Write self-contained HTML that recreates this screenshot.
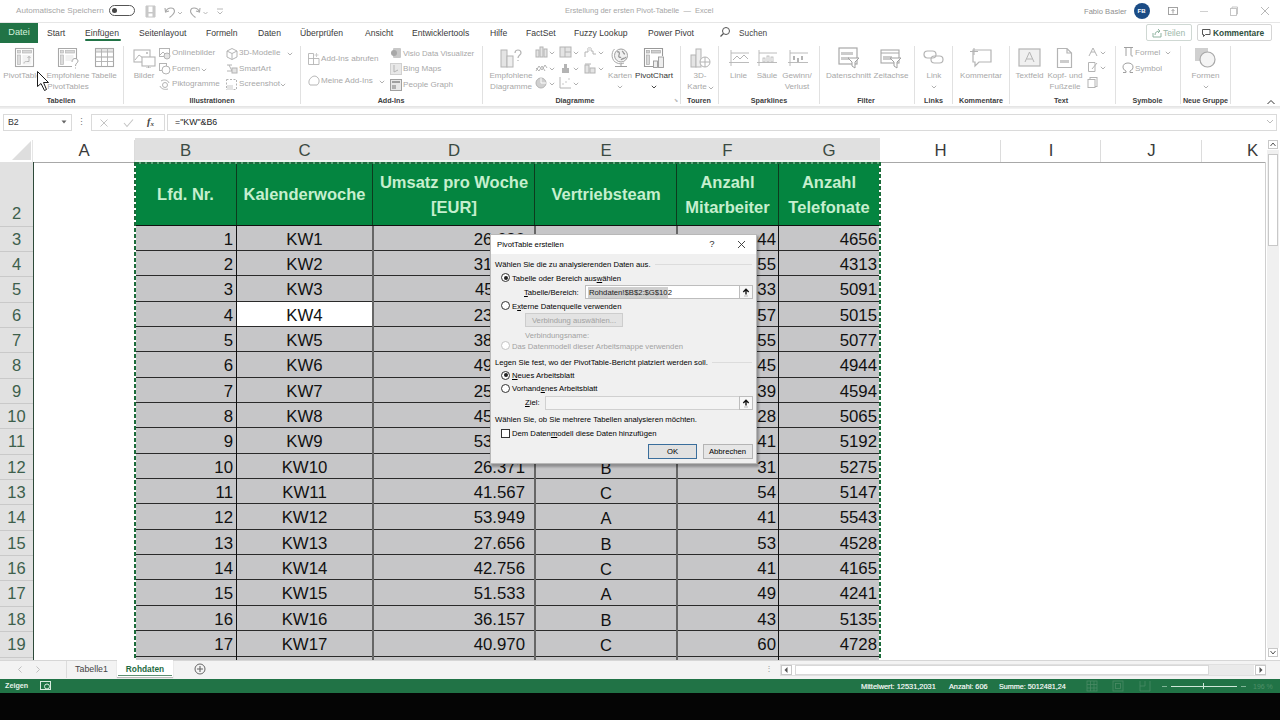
<!DOCTYPE html><html><head><meta charset="utf-8"><style>
html,body{margin:0;padding:0;width:1280px;height:720px;overflow:hidden;background:#fff;}
body{position:relative;font-family:"Liberation Sans",sans-serif;}
.t{position:absolute;white-space:pre;line-height:1;transform-origin:0 0;}
.t{margin-top:-0.5em;}
u{text-underline-offset:1px;text-decoration-thickness:0.8px;}
</style></head><body>

<div style="position:absolute;left:0px;top:0px;width:1280px;height:22px;background:#fff;"></div>
<div style="position:absolute;left:0px;top:22px;width:1280px;height:1px;background:#e6e6e6;"></div>
<div class="t" style="left:16px;top:11px;font-size:8.1px;color:#a6a6a6;font-weight:400;">Automatische Speichern</div>
<div style="position:absolute;left:109px;top:5px;width:26px;height:11px;border:1px solid #555;border-radius:6px;box-sizing:border-box;"></div>
<div style="position:absolute;left:112px;top:8px;width:5px;height:5px;background:#444;border-radius:50%;"></div>
<svg style="position:absolute;left:144px;top:4px;" width="13" height="14" viewBox="0 0 13 14" fill="none"><path d="M2 2 H11 V13 H2 Z" stroke="#c4c4c4" stroke-width="1"/><rect x="2" y="2" width="2.5" height="11" fill="#c8c8c8"/><rect x="8.5" y="2" width="2.5" height="11" fill="#c8c8c8"/><rect x="4" y="8" width="5" height="1.5" fill="#c8c8c8"/></svg>
<svg style="position:absolute;left:163px;top:3px;" width="26" height="16" viewBox="0 0 26 16" fill="none"><path d="M2.5 8.5 C5 4 11 4 11.5 8 C11.5 10 10 12 6.5 14.5" stroke="#a8a8a8" stroke-width="1.1"/><path d="M2 5 L2.5 9 L6 8" stroke="#a8a8a8" stroke-width="1.1"/><path d="M15 9 l2 2 l2 -2" stroke="#b0b0b0" stroke-width="0.9"/></svg>
<svg style="position:absolute;left:189px;top:3px;" width="26" height="16" viewBox="0 0 26 16" fill="none"><path d="M10.5 8.5 C8 4 2 4 1.5 8 C1.5 10 3 12 6.5 14.5" stroke="#a8a8a8" stroke-width="1.1"/><path d="M11 5 L10.5 9 L7 8" stroke="#a8a8a8" stroke-width="1.1"/><path d="M14.5 9 l2 2 l2 -2" stroke="#b0b0b0" stroke-width="0.9"/></svg>
<svg style="position:absolute;left:215px;top:6px;" width="10" height="10" viewBox="0 0 10 10" fill="none"><path d="M2 3 H8" stroke="#b0b0b0" stroke-width="0.9"/><path d="M2.5 5.5 l2.5 2.5 l2.5 -2.5" stroke="#b0b0b0" stroke-width="0.9"/></svg>
<div class="t" style="left:565px;top:11px;font-size:7.5px;color:#a6a6a6;font-weight:400;">Erstellung der ersten Pivot-Tabelle  —  Excel</div>
<div class="t" style="left:1084px;top:12px;font-size:7.6px;color:#8f8f8f;font-weight:400;">Fabio Basler</div>
<div style="position:absolute;left:1133.5px;top:3px;width:16px;height:16px;background:#1b4c85;border-radius:50%;"></div>
<div class="t" style="left:1141.5px;transform:translateX(-50%);top:11.2px;font-size:6px;color:#fff;font-weight:700;">FB</div>
<svg style="position:absolute;left:1166px;top:5px;" width="13" height="12" viewBox="0 0 13 12" fill="none"><rect x="2.5" y="2.5" width="9" height="7" stroke="#999" stroke-width="0.9"/><path d="M7 8.5 V4.5 M5.5 6 L7 4.5 L8.5 6" stroke="#999" stroke-width="0.9"/></svg>
<div style="position:absolute;left:1200px;top:11px;width:8px;height:1px;background:#d0d0d0;"></div>
<svg style="position:absolute;left:1228px;top:5px;" width="12" height="12" viewBox="0 0 12 12" fill="none"><rect x="2.5" y="3.5" width="6" height="7" stroke="#c0c0c0" stroke-width="0.9"/><path d="M4 3.5 V2 H9.5 V9 H8.5" stroke="#c0c0c0" stroke-width="0.9"/></svg>
<svg style="position:absolute;left:1259px;top:5px;" width="12" height="12" viewBox="0 0 12 12" fill="none"><path d="M2 2 L10 10 M10 2 L2 10" stroke="#b0b0b0" stroke-width="0.9"/></svg>
<div style="position:absolute;left:0px;top:23px;width:38px;height:20px;background:#217346;"></div>
<div class="t" style="left:19px;transform:translateX(-50%);top:33px;font-size:9.2px;color:#d4f2dc;font-weight:400;">Datei</div>
<div class="t" style="left:47px;top:33px;font-size:8.6px;color:#3a3a3a;font-weight:400;">Start</div>
<div class="t" style="left:85px;top:33px;font-size:8.6px;color:#3a3a3a;font-weight:400;">Einfügen</div>
<div class="t" style="left:139px;top:33px;font-size:8.6px;color:#3a3a3a;font-weight:400;">Seitenlayout</div>
<div class="t" style="left:206px;top:33px;font-size:8.6px;color:#3a3a3a;font-weight:400;">Formeln</div>
<div class="t" style="left:258px;top:33px;font-size:8.6px;color:#3a3a3a;font-weight:400;">Daten</div>
<div class="t" style="left:300px;top:33px;font-size:8.6px;color:#3a3a3a;font-weight:400;">Überprüfen</div>
<div class="t" style="left:365px;top:33px;font-size:8.6px;color:#3a3a3a;font-weight:400;">Ansicht</div>
<div class="t" style="left:412px;top:33px;font-size:8.6px;color:#3a3a3a;font-weight:400;">Entwicklertools</div>
<div class="t" style="left:490px;top:33px;font-size:8.6px;color:#3a3a3a;font-weight:400;">Hilfe</div>
<div class="t" style="left:526px;top:33px;font-size:8.6px;color:#3a3a3a;font-weight:400;">FactSet</div>
<div class="t" style="left:574px;top:33px;font-size:8.6px;color:#3a3a3a;font-weight:400;">Fuzzy Lookup</div>
<div class="t" style="left:648px;top:33px;font-size:8.6px;color:#3a3a3a;font-weight:400;">Power Pivot</div>
<div style="position:absolute;left:85px;top:39px;width:36px;height:2px;background:#217346;border-radius:1px;"></div>
<svg style="position:absolute;left:719px;top:26px;" width="12" height="12" viewBox="0 0 12 12" fill="none"><circle cx="7" cy="5" r="3.5" stroke="#555" stroke-width="1"/><path d="M4.5 7.5 L1.5 10.5" stroke="#555" stroke-width="1.2"/></svg>
<div class="t" style="left:739px;top:33px;font-size:8.3px;color:#444;font-weight:400;">Suchen</div>
<div style="position:absolute;left:1146px;top:24px;width:46px;height:17px;border:1px solid #cfd8d3;border-radius:2px;box-sizing:border-box;background:#fff;"></div>
<svg style="position:absolute;left:1151px;top:27px;" width="12" height="12" viewBox="0 0 12 12" fill="none"><path d="M2 6 V10 H10 V6" stroke="#8fb3a0" stroke-width="1"/><path d="M4 8 C4 5 6 4 9 4 M7 2 L9 4 L7 6" stroke="#8fb3a0" stroke-width="1"/></svg>
<div class="t" style="left:1163px;top:33px;font-size:8.5px;color:#9db8aa;font-weight:400;">Teilen</div>
<div style="position:absolute;left:1197px;top:24px;width:75px;height:17px;border:1px solid #d5d5d5;border-radius:2px;box-sizing:border-box;background:#fff;"></div>
<svg style="position:absolute;left:1201px;top:28px;" width="10" height="10" viewBox="0 0 10 10" fill="none"><path d="M1.5 1.5 H9 V6.5 H4.5 L2.5 8.5 V6.5 H1.5 Z" stroke="#444" stroke-width="0.9"/></svg>
<div class="t" style="left:1213px;top:33px;font-size:8.4px;color:#2f5040;font-weight:700;">Kommentare</div>
<div style="position:absolute;left:0px;top:43px;width:1280px;height:64px;background:#fff;"></div>
<div style="position:absolute;left:0px;top:106px;width:1280px;height:3px;background:linear-gradient(#e2e2e2,#f4f4f4);"></div>
<div style="position:absolute;left:123px;top:46px;width:1px;height:58px;background:#e1e1e1;"></div>
<div style="position:absolute;left:300px;top:46px;width:1px;height:58px;background:#e1e1e1;"></div>
<div style="position:absolute;left:482px;top:46px;width:1px;height:58px;background:#e1e1e1;"></div>
<div style="position:absolute;left:680px;top:46px;width:1px;height:58px;background:#e1e1e1;"></div>
<div style="position:absolute;left:718px;top:46px;width:1px;height:58px;background:#e1e1e1;"></div>
<div style="position:absolute;left:819px;top:46px;width:1px;height:58px;background:#e1e1e1;"></div>
<div style="position:absolute;left:914px;top:46px;width:1px;height:58px;background:#e1e1e1;"></div>
<div style="position:absolute;left:952px;top:46px;width:1px;height:58px;background:#e1e1e1;"></div>
<div style="position:absolute;left:1009px;top:46px;width:1px;height:58px;background:#e1e1e1;"></div>
<div style="position:absolute;left:1115px;top:46px;width:1px;height:58px;background:#e1e1e1;"></div>
<div style="position:absolute;left:1180px;top:46px;width:1px;height:58px;background:#e1e1e1;"></div>
<div style="position:absolute;left:1230px;top:46px;width:1px;height:58px;background:#e1e1e1;"></div>
<svg style="position:absolute;left:14px;top:47px;" width="22" height="22" viewBox="0 0 22 22" fill="none"><rect x="1.5" y="1.5" width="18" height="18" stroke="#a8a8a8" stroke-width="1.1"/><rect x="3.5" y="3.5" width="3" height="2.5" fill="#d8d8d8" stroke="#b8b8b8" stroke-width="0.7"/><rect x="8.5" y="3.5" width="9" height="2.5" fill="#d8d8d8" stroke="#b8b8b8" stroke-width="0.7"/><rect x="3.5" y="8" width="3" height="9.5" fill="#dcdcdc" stroke="#b8b8b8" stroke-width="0.7"/><rect x="8.5" y="8" width="9" height="9.5" fill="#f2f2f2"/><path d="M10 16.5 C10 15 11 14.5 12.5 14.5 H15 V9.5 M13.5 11 L15 9.3 L16.5 11" stroke="#b0b0b0" stroke-width="0.9"/></svg>
<div class="t" style="left:22px;transform:translateX(-50%);top:76.5px;font-size:8.1px;color:#a8a8a8;font-weight:400;">PivotTable</div>
<svg style="position:absolute;left:57px;top:47px;" width="24" height="23" viewBox="0 0 24 23" fill="none"><path d="M15 19.5 H1.5 V1.5 H19.5 V12" stroke="#a8a8a8" stroke-width="1.1"/><rect x="3.5" y="3.5" width="3" height="2.5" fill="#d8d8d8" stroke="#b8b8b8" stroke-width="0.7"/><rect x="8.5" y="3.5" width="9" height="2.5" fill="#d8d8d8" stroke="#b8b8b8" stroke-width="0.7"/><rect x="3.5" y="8" width="3" height="9.5" fill="#dcdcdc" stroke="#b8b8b8" stroke-width="0.7"/><rect x="8.5" y="8" width="8" height="6" fill="#f0f0f0"/><path d="M15 15 C15 12.5 16.5 11.5 18 11.5 C19.5 11.5 21 12.5 21 14 C21 16 18.5 16 18.5 19 M18.5 20.5 V21.5" stroke="#a8a8a8" stroke-width="1"/></svg>
<div class="t" style="left:68px;transform:translateX(-50%);top:76.5px;font-size:8.1px;color:#a8a8a8;font-weight:400;">Empfohlene</div>
<div class="t" style="left:68px;transform:translateX(-50%);top:87.5px;font-size:8.1px;color:#a8a8a8;font-weight:400;">PivotTables</div>
<svg style="position:absolute;left:94px;top:47px;" width="22" height="22" viewBox="0 0 22 22" fill="none"><rect x="1.5" y="1.5" width="18" height="18" fill="#fff" stroke="#a8a8a8" stroke-width="1.1"/><rect x="2" y="2" width="17" height="3" fill="#e4e4e4"/><rect x="2" y="9" width="17" height="2" fill="#ececec"/><path d="M1.5 5 H19.5 M1.5 10 H19.5 M1.5 14.5 H19.5 M7.5 1.5 V19.5 M13.5 1.5 V19.5" stroke="#b0b0b0" stroke-width="0.9"/></svg>
<div class="t" style="left:104px;transform:translateX(-50%);top:76.5px;font-size:8.1px;color:#a8a8a8;font-weight:400;">Tabelle</div>
<div class="t" style="left:61px;transform:translateX(-50%);top:101px;font-size:7.2px;color:#404040;font-weight:700;">Tabellen</div>
<svg style="position:absolute;left:36px;top:70px;" width="16" height="24" viewBox="0 0 16 24" fill="none"><path d="M1.5 1.5 V16.5 L5 13.5 L8.5 20.5 L10.5 19.5 L7.5 12.5 H12.5 Z" fill="#fff" stroke="#1a1a1a" stroke-width="1" stroke-linejoin="miter"/></svg>
<svg style="position:absolute;left:133px;top:49px;" width="23" height="19" viewBox="0 0 23 19" fill="none"><rect x="1" y="1" width="16" height="12" stroke="#b4b4b4" stroke-width="1.1"/><path d="M2 11 L6 6 L10 9" stroke="#b4b4b4" stroke-width="1"/><circle cx="14" cy="4" r="1" fill="#b4b4b4"/><rect x="9" y="8" width="13" height="9" fill="#fff" stroke="#b4b4b4" stroke-width="1.1"/><path d="M15.5 17 V19 M13 19 H18" stroke="#b4b4b4"/></svg>
<div class="t" style="left:144px;transform:translateX(-50%);top:76.5px;font-size:8.1px;color:#a8a8a8;font-weight:400;">Bilder</div>
<svg style="position:absolute;left:159px;top:47.5px;" width="12" height="12" viewBox="0 0 12 12" fill="none"><rect x="0.5" y="0.5" width="10" height="8" stroke="#b4b4b4"/><path d="M1 7 L4 4 L6 6" stroke="#b4b4b4"/><circle cx="8" cy="8" r="3" fill="#e4e4e4" stroke="#b4b4b4"/></svg>
<div class="t" style="left:172px;top:53.5px;font-size:8.1px;color:#a8a8a8;font-weight:400;">Onlinebilder</div>
<svg style="position:absolute;left:159px;top:63px;" width="12" height="12" viewBox="0 0 12 12" fill="none"><rect x="0.5" y="0.5" width="7" height="7" stroke="#b4b4b4"/><circle cx="7" cy="7" r="4" fill="#fff" stroke="#b4b4b4"/></svg>
<div class="t" style="left:172px;top:69px;font-size:8.1px;color:#a8a8a8;font-weight:400;">Formen</div>
<svg style="position:absolute;left:201px;top:67.5px;" width="6" height="4" viewBox="0 0 6 4" fill="none"><path d="M0.8 0.8 L3 3 L5.2 0.8" stroke="#a8a8a8" stroke-width="0.9"/></svg>
<svg style="position:absolute;left:159px;top:78.5px;" width="12" height="12" viewBox="0 0 12 12" fill="none"><path d="M2 2 C5 0 9 1 10 4 M1 7 C2 10 6 11 9 10" stroke="#b4b4b4"/><circle cx="6" cy="6" r="2.5" stroke="#b4b4b4"/></svg>
<div class="t" style="left:172px;top:84.5px;font-size:8.1px;color:#a8a8a8;font-weight:400;">Piktogramme</div>
<svg style="position:absolute;left:226px;top:47.5px;" width="12" height="12" viewBox="0 0 12 12" fill="none"><path d="M6 0.5 L11 3 V9 L6 11.5 L1 9 V3 Z M1 3 L6 5.5 L11 3 M6 5.5 V11.5" stroke="#b4b4b4"/></svg>
<div class="t" style="left:239px;top:53.5px;font-size:8.1px;color:#a8a8a8;font-weight:400;">3D-Modelle</div>
<svg style="position:absolute;left:287px;top:52px;" width="6" height="4" viewBox="0 0 6 4" fill="none"><path d="M0.8 0.8 L3 3 L5.2 0.8" stroke="#a8a8a8" stroke-width="0.9"/></svg>
<svg style="position:absolute;left:226px;top:63px;" width="12" height="12" viewBox="0 0 12 12" fill="none"><path d="M1 2 H6 M3 2 L6 8 M1 8 H6" stroke="#b4b4b4"/><rect x="6" y="5" width="5" height="5" fill="#e4e4e4" stroke="#b4b4b4"/></svg>
<div class="t" style="left:239px;top:69px;font-size:8.1px;color:#a8a8a8;font-weight:400;">SmartArt</div>
<svg style="position:absolute;left:226px;top:78.5px;" width="12" height="12" viewBox="0 0 12 12" fill="none"><rect x="0.5" y="0.5" width="10" height="10" stroke="#b4b4b4" stroke-dasharray="2 1.5"/><rect x="1" y="6" width="6" height="5" fill="#e4e4e4"/></svg>
<div class="t" style="left:239px;top:84.5px;font-size:8.1px;color:#a8a8a8;font-weight:400;">Screenshot</div>
<svg style="position:absolute;left:279.5px;top:83px;" width="6" height="4" viewBox="0 0 6 4" fill="none"><path d="M0.8 0.8 L3 3 L5.2 0.8" stroke="#a8a8a8" stroke-width="0.9"/></svg>
<div class="t" style="left:212px;transform:translateX(-50%);top:101px;font-size:7.2px;color:#404040;font-weight:700;">Illustrationen</div>
<svg style="position:absolute;left:308px;top:53px;" width="12" height="12" viewBox="0 0 12 12" fill="none"><path d="M0.5 5.5 H11 M5.5 0.5 V11.5 M0.5 0.5 H5.5 M0.5 0.5 V11.5 H11 V5.5" stroke="#b4b4b4" stroke-width="0.9"/><path d="M8.5 0 V4 M6.5 2 H10.5" stroke="#c8c8c8" stroke-width="0.9"/></svg>
<div class="t" style="left:321px;top:59.5px;font-size:8.1px;color:#a8a8a8;font-weight:400;">Add-Ins abrufen</div>
<svg style="position:absolute;left:308px;top:75px;" width="12" height="12" viewBox="0 0 12 12" fill="none"><path d="M2 10 C0 8 1 4 3 3 C4 1 8 0 10 3 C12 5 11 9 9 10 Z" stroke="#b4b4b4"/></svg>
<div class="t" style="left:321px;top:81px;font-size:8.1px;color:#a8a8a8;font-weight:400;">Meine Add-Ins</div>
<svg style="position:absolute;left:379px;top:79.5px;" width="6" height="4" viewBox="0 0 6 4" fill="none"><path d="M0.8 0.8 L3 3 L5.2 0.8" stroke="#a8a8a8" stroke-width="0.9"/></svg>
<svg style="position:absolute;left:390px;top:47px;" width="12" height="12" viewBox="0 0 12 12" fill="none"><rect x="3" y="1" width="8" height="10" rx="1" fill="#c8c8c8"/><circle cx="4" cy="6" r="3" fill="#a8a8a8"/></svg>
<div class="t" style="left:403px;top:53.5px;font-size:7.8px;color:#a8a8a8;font-weight:400;">Visio Data Visualizer</div>
<svg style="position:absolute;left:390px;top:63px;" width="12" height="12" viewBox="0 0 12 12" fill="none"><rect x="0.5" y="0.5" width="11" height="11" fill="#e8e8e8" stroke="#d0d0d0"/><path d="M4 2 V9 L8 7" stroke="#b4b4b4"/></svg>
<div class="t" style="left:403px;top:69.5px;font-size:8.1px;color:#a8a8a8;font-weight:400;">Bing Maps</div>
<svg style="position:absolute;left:390px;top:79px;" width="12" height="12" viewBox="0 0 12 12" fill="none"><rect x="0.5" y="0.5" width="11" height="11" fill="#e8e8e8" stroke="#a0a0a0"/><rect x="2" y="2" width="8" height="2" fill="#a0a0a0"/><rect x="2" y="6" width="4" height="4" fill="#b0b0b0"/></svg>
<div class="t" style="left:403px;top:85.5px;font-size:8.1px;color:#a8a8a8;font-weight:400;">People Graph</div>
<div class="t" style="left:391px;transform:translateX(-50%);top:101px;font-size:7.2px;color:#404040;font-weight:700;">Add-Ins</div>
<svg style="position:absolute;left:499px;top:47px;" width="24" height="22" viewBox="0 0 24 22" fill="none"><rect x="2" y="3" width="6" height="17" fill="#e4e4e4" stroke="#b4b4b4"/><rect x="8" y="9" width="6" height="11" fill="#eee" stroke="#b4b4b4"/><path d="M16 6 C16 2 22 2 22 6 C22 8 19 8 19 11 M19 13 V14" stroke="#b4b4b4" stroke-width="1.2"/></svg>
<div class="t" style="left:511px;transform:translateX(-50%);top:76.5px;font-size:8.1px;color:#a8a8a8;font-weight:400;">Empfohlene</div>
<div class="t" style="left:511px;transform:translateX(-50%);top:87.5px;font-size:8.1px;color:#a8a8a8;font-weight:400;">Diagramme</div>
<svg style="position:absolute;left:535px;top:46px;" width="13" height="12" viewBox="0 0 13 12" fill="none"><rect x="1" y="4" width="3" height="7" fill="#e4e4e4" stroke="#b4b4b4"/><rect x="5" y="1" width="3" height="10" fill="#e4e4e4" stroke="#b4b4b4"/><rect x="9" y="3" width="3" height="8" fill="#e4e4e4" stroke="#b4b4b4"/></svg>
<svg style="position:absolute;left:549px;top:50.5px;" width="6" height="4" viewBox="0 0 6 4" fill="none"><path d="M0.8 0.8 L3 3 L5.2 0.8" stroke="#a8a8a8" stroke-width="0.9"/></svg>
<svg style="position:absolute;left:559px;top:46px;" width="13" height="12" viewBox="0 0 13 12" fill="none"><rect x="1" y="1" width="11" height="10" fill="#e4e4e4" stroke="#b4b4b4"/><path d="M6 1 V11 M6 6 H12" stroke="#b4b4b4"/></svg>
<svg style="position:absolute;left:573px;top:50.5px;" width="6" height="4" viewBox="0 0 6 4" fill="none"><path d="M0.8 0.8 L3 3 L5.2 0.8" stroke="#a8a8a8" stroke-width="0.9"/></svg>
<svg style="position:absolute;left:584px;top:46px;" width="13" height="12" viewBox="0 0 13 12" fill="none"><path d="M1 11 V6 H4 V2 H7 V5 H9 V8 H12" stroke="#b4b4b4"/><rect x="4" y="2" width="3" height="3" fill="#e4e4e4"/></svg>
<svg style="position:absolute;left:598px;top:50.5px;" width="6" height="4" viewBox="0 0 6 4" fill="none"><path d="M0.8 0.8 L3 3 L5.2 0.8" stroke="#a8a8a8" stroke-width="0.9"/></svg>
<svg style="position:absolute;left:535px;top:62px;" width="13" height="12" viewBox="0 0 13 12" fill="none"><path d="M1 9 L4 4 L7 8 L10 3 L12 6 M1 6 L4 9 L7 4 L10 9" stroke="#b4b4b4"/></svg>
<svg style="position:absolute;left:549px;top:66.5px;" width="6" height="4" viewBox="0 0 6 4" fill="none"><path d="M0.8 0.8 L3 3 L5.2 0.8" stroke="#a8a8a8" stroke-width="0.9"/></svg>
<svg style="position:absolute;left:559px;top:62px;" width="13" height="12" viewBox="0 0 13 12" fill="none"><rect x="3" y="6" width="7" height="5" fill="#b4b4b4"/><rect x="5" y="2" width="3" height="4" fill="#b4b4b4"/></svg>
<svg style="position:absolute;left:573px;top:66.5px;" width="6" height="4" viewBox="0 0 6 4" fill="none"><path d="M0.8 0.8 L3 3 L5.2 0.8" stroke="#a8a8a8" stroke-width="0.9"/></svg>
<svg style="position:absolute;left:584px;top:62px;" width="13" height="12" viewBox="0 0 13 12" fill="none"><rect x="1" y="3" width="4" height="8" fill="#e4e4e4" stroke="#b4b4b4"/><rect x="6" y="6" width="5" height="5" fill="#e4e4e4" stroke="#b4b4b4"/><path d="M1 2 H7" stroke="#b4b4b4"/></svg>
<svg style="position:absolute;left:598px;top:66.5px;" width="6" height="4" viewBox="0 0 6 4" fill="none"><path d="M0.8 0.8 L3 3 L5.2 0.8" stroke="#a8a8a8" stroke-width="0.9"/></svg>
<svg style="position:absolute;left:535px;top:77px;" width="13" height="12" viewBox="0 0 13 12" fill="none"><circle cx="6" cy="6" r="5" fill="#d0d0d0" stroke="#b4b4b4"/><path d="M6 6 V1 M6 6 L11 6" stroke="#fff"/></svg>
<svg style="position:absolute;left:549px;top:81.5px;" width="6" height="4" viewBox="0 0 6 4" fill="none"><path d="M0.8 0.8 L3 3 L5.2 0.8" stroke="#a8a8a8" stroke-width="0.9"/></svg>
<svg style="position:absolute;left:559px;top:77px;" width="13" height="12" viewBox="0 0 13 12" fill="none"><path d="M1 0 V11 H12" stroke="#b4b4b4"/><circle cx="4" cy="7" r="0.7" fill="#b4b4b4"/><circle cx="7" cy="5" r="0.7" fill="#b4b4b4"/><circle cx="10" cy="2" r="0.7" fill="#b4b4b4"/></svg>
<svg style="position:absolute;left:573px;top:81.5px;" width="6" height="4" viewBox="0 0 6 4" fill="none"><path d="M0.8 0.8 L3 3 L5.2 0.8" stroke="#a8a8a8" stroke-width="0.9"/></svg>
<svg style="position:absolute;left:610px;top:46px;" width="22" height="22" viewBox="0 0 22 22" fill="none"><circle cx="11" cy="9.5" r="6.5" fill="#f0f0f0" stroke="#a0a0a0" stroke-width="1"/><path d="M7 6 C9 5 10 7 9 9 C8 11 10 12 11 11 M12 5 C14 6 13 8 15 8 M11 14 C12 12 15 13 16 11" stroke="#999" stroke-width="1.3"/><path d="M4.5 3 C0.5 7 1.5 15 7 17 C9 18 12 18 14 17" stroke="#a8a8a8" stroke-width="1"/><path d="M11 17.5 V20 M5 20.5 H17" stroke="#a0a0a0" stroke-width="1"/></svg>
<div class="t" style="left:620px;transform:translateX(-50%);top:76.5px;font-size:8.1px;color:#a8a8a8;font-weight:400;">Karten</div>
<svg style="position:absolute;left:617px;top:85px;" width="6" height="4" viewBox="0 0 6 4" fill="none"><path d="M0.8 0.8 L3 3 L5.2 0.8" stroke="#a8a8a8" stroke-width="0.9"/></svg>
<svg style="position:absolute;left:643px;top:47px;" width="24" height="22" viewBox="0 0 24 22" fill="none"><path d="M10 19.5 H1.5 V1.5 H19.5 V9" stroke="#999" stroke-width="1.1"/><rect x="3.5" y="3.5" width="3" height="2.5" fill="#d0d0d0" stroke="#aaa" stroke-width="0.7"/><rect x="8.5" y="3.5" width="9" height="2.5" fill="#d0d0d0" stroke="#aaa" stroke-width="0.7"/><rect x="3.5" y="8" width="3" height="9.5" fill="#d8d8d8" stroke="#aaa" stroke-width="0.7"/><rect x="10.5" y="14" width="4" height="6.5" fill="#eee" stroke="#999" stroke-width="0.9"/><rect x="15.5" y="10" width="5" height="10.5" fill="#eee" stroke="#999" stroke-width="0.9"/></svg>
<div class="t" style="left:654px;transform:translateX(-50%);top:76.5px;font-size:8.1px;color:#333;font-weight:400;">PivotChart</div>
<svg style="position:absolute;left:651px;top:85px;" width="6" height="4" viewBox="0 0 6 4" fill="none"><path d="M0.8 0.8 L3 3 L5.2 0.8" stroke="#333" stroke-width="0.9"/></svg>
<div class="t" style="left:676px;transform:translateX(-50%);top:100px;font-size:5px;color:#bbb;font-weight:400;">⬊</div>
<div class="t" style="left:575px;transform:translateX(-50%);top:101px;font-size:7.2px;color:#404040;font-weight:700;">Diagramme</div>
<svg style="position:absolute;left:689px;top:47px;" width="23" height="22" viewBox="0 0 23 22" fill="none"><rect x="2" y="8" width="5" height="12" fill="#e4e4e4" stroke="#b4b4b4"/><rect x="7" y="2" width="5" height="18" fill="#eee" stroke="#b4b4b4"/><circle cx="16" cy="15" r="5" fill="#fff" stroke="#b4b4b4"/><path d="M11 15 H21 M16 10 V20" stroke="#b4b4b4"/></svg>
<div class="t" style="left:700px;transform:translateX(-50%);top:76.5px;font-size:8.1px;color:#a8a8a8;font-weight:400;">3D-</div>
<div class="t" style="left:697px;transform:translateX(-50%);top:87.5px;font-size:8.1px;color:#a8a8a8;font-weight:400;">Karte</div>
<svg style="position:absolute;left:708px;top:86px;" width="6" height="4" viewBox="0 0 6 4" fill="none"><path d="M0.8 0.8 L3 3 L5.2 0.8" stroke="#a8a8a8" stroke-width="0.9"/></svg>
<div class="t" style="left:699px;transform:translateX(-50%);top:101px;font-size:7.2px;color:#404040;font-weight:700;">Touren</div>
<svg style="position:absolute;left:729px;top:49px;" width="21" height="18" viewBox="0 0 21 18" fill="none"><path d="M0 13.5 H20 M2 1 V17 M2 4 H20" stroke="#b4b4b4" stroke-width="0.9"/><path d="M4 11 L8 7 L11 10 L15 6 L19 10" stroke="#b4b4b4"/></svg>
<div class="t" style="left:738.5px;transform:translateX(-50%);top:76.5px;font-size:8.1px;color:#a8a8a8;font-weight:400;">Linie</div>
<svg style="position:absolute;left:757px;top:49px;" width="21" height="18" viewBox="0 0 21 18" fill="none"><path d="M0 13.5 H20 M2 1 V17 M2 4 H20" stroke="#b4b4b4" stroke-width="0.9"/><rect x="6" y="9" width="2" height="4" stroke="#b4b4b4" stroke-width="0.8"/><rect x="10" y="7" width="2" height="6" stroke="#b4b4b4" stroke-width="0.8"/><rect x="14" y="8" width="2" height="5" stroke="#b4b4b4" stroke-width="0.8"/></svg>
<div class="t" style="left:767px;transform:translateX(-50%);top:76.5px;font-size:8.1px;color:#a8a8a8;font-weight:400;">Säule</div>
<svg style="position:absolute;left:788px;top:49px;" width="21" height="18" viewBox="0 0 21 18" fill="none"><path d="M0 13.5 H20 M2 1 V17 M2 4 H20" stroke="#b4b4b4" stroke-width="0.9"/><rect x="5" y="7" width="2" height="4" fill="#b4b4b4"/><rect x="9" y="9" width="2" height="4" fill="#b4b4b4"/><rect x="13" y="7" width="2" height="4" fill="#b4b4b4"/></svg>
<div class="t" style="left:797px;transform:translateX(-50%);top:76.5px;font-size:8.1px;color:#a8a8a8;font-weight:400;">Gewinn/</div>
<div class="t" style="left:797px;transform:translateX(-50%);top:87.5px;font-size:8.1px;color:#a8a8a8;font-weight:400;">Verlust</div>
<div class="t" style="left:769px;transform:translateX(-50%);top:101px;font-size:7.2px;color:#404040;font-weight:700;">Sparklines</div>
<svg style="position:absolute;left:838px;top:47px;" width="22" height="22" viewBox="0 0 22 22" fill="none"><rect x="1" y="1" width="18" height="16" stroke="#a8a8a8" stroke-width="1.2"/><rect x="3" y="5" width="12" height="3" fill="#ccc"/><rect x="3" y="10" width="8" height="3" fill="#ccc"/><path d="M10 11 H21 L17 15 V21 L14 19 V15 Z" fill="#fff" stroke="#a0a0a0"/></svg>
<div class="t" style="left:848.5px;transform:translateX(-50%);top:76.5px;font-size:8.1px;color:#a8a8a8;font-weight:400;">Datenschnitt</div>
<svg style="position:absolute;left:880px;top:49px;" width="22" height="20" viewBox="0 0 22 20" fill="none"><rect x="1" y="1" width="18" height="13" stroke="#a8a8a8" stroke-width="1.1"/><path d="M1 4 H19" stroke="#a8a8a8"/><rect x="3" y="7" width="9" height="4" fill="#ccc"/><path d="M10 9 H21 L17 13 V19 L14 17 V13 Z" fill="#fff" stroke="#a0a0a0"/></svg>
<div class="t" style="left:891px;transform:translateX(-50%);top:76.5px;font-size:8.1px;color:#a8a8a8;font-weight:400;">Zeitachse</div>
<div class="t" style="left:866px;transform:translateX(-50%);top:101px;font-size:7.2px;color:#404040;font-weight:700;">Filter</div>
<svg style="position:absolute;left:923px;top:49px;" width="22" height="16" viewBox="0 0 22 16" fill="none"><rect x="1" y="2" width="12" height="7" rx="3.5" stroke="#b4b4b4" stroke-width="1.2"/><rect x="8" y="7" width="12" height="7" rx="3.5" stroke="#b4b4b4" stroke-width="1.2"/></svg>
<div class="t" style="left:934px;transform:translateX(-50%);top:76.5px;font-size:8.1px;color:#a8a8a8;font-weight:400;">Link</div>
<svg style="position:absolute;left:931px;top:85px;" width="6" height="4" viewBox="0 0 6 4" fill="none"><path d="M0.8 0.8 L3 3 L5.2 0.8" stroke="#a8a8a8" stroke-width="0.9"/></svg>
<div class="t" style="left:933.5px;transform:translateX(-50%);top:101px;font-size:7.2px;color:#404040;font-weight:700;">Links</div>
<svg style="position:absolute;left:969px;top:47px;" width="24" height="22" viewBox="0 0 24 22" fill="none"><path d="M4 3 H22 V15 H10 L6 19 V15 H4 Z" stroke="#b4b4b4" stroke-width="1.2"/><path d="M5 1 V8 M1 4.5 H9" stroke="#b4b4b4" stroke-width="1.1"/></svg>
<div class="t" style="left:981px;transform:translateX(-50%);top:76.5px;font-size:8.1px;color:#a8a8a8;font-weight:400;">Kommentar</div>
<div class="t" style="left:981px;transform:translateX(-50%);top:101px;font-size:7.2px;color:#404040;font-weight:700;">Kommentare</div>
<svg style="position:absolute;left:1018px;top:47px;" width="24" height="22" viewBox="0 0 24 22" fill="none"><rect x="1" y="2" width="21" height="17" fill="#f0f0f0" stroke="#b4b4b4" stroke-width="1.2"/><path d="M7 15 L11.5 5 L16 15 M8.5 12 H14.5" stroke="#b4b4b4" stroke-width="1"/></svg>
<div class="t" style="left:1029.5px;transform:translateX(-50%);top:76.5px;font-size:8.1px;color:#a8a8a8;font-weight:400;">Textfeld</div>
<svg style="position:absolute;left:1056px;top:47px;" width="17" height="22" viewBox="0 0 17 22" fill="none"><path d="M1.5 1.5 H11 L15.5 6 V20.5 H1.5 Z M11 1.5 V6 H15.5" stroke="#b4b4b4" stroke-width="1.2"/><rect x="4" y="13" width="9" height="3" fill="#ccc"/></svg>
<div class="t" style="left:1065px;transform:translateX(-50%);top:76.5px;font-size:8.1px;color:#a8a8a8;font-weight:400;">Kopf- und</div>
<div class="t" style="left:1065px;transform:translateX(-50%);top:87.5px;font-size:8.1px;color:#a8a8a8;font-weight:400;">Fußzeile</div>
<svg style="position:absolute;left:1087px;top:46px;" width="12" height="12" viewBox="0 0 12 12" fill="none"><path d="M2 10 L6 2 L10 10 M4 6 H8" stroke="#b4b4b4"/></svg>
<svg style="position:absolute;left:1100px;top:50.5px;" width="6" height="4" viewBox="0 0 6 4" fill="none"><path d="M0.8 0.8 L3 3 L5.2 0.8" stroke="#a8a8a8" stroke-width="0.9"/></svg>
<svg style="position:absolute;left:1087px;top:61px;" width="12" height="12" viewBox="0 0 12 12" fill="none"><path d="M1.5 1.5 H8 V10.5 H1.5 Z M5 8 L10 2" stroke="#b4b4b4"/></svg>
<svg style="position:absolute;left:1100px;top:65.5px;" width="6" height="4" viewBox="0 0 6 4" fill="none"><path d="M0.8 0.8 L3 3 L5.2 0.8" stroke="#a8a8a8" stroke-width="0.9"/></svg>
<svg style="position:absolute;left:1087px;top:76px;" width="12" height="12" viewBox="0 0 12 12" fill="none"><rect x="3" y="1.5" width="7" height="9" stroke="#b4b4b4"/><rect x="1" y="3.5" width="7" height="8" fill="#fff" stroke="#b4b4b4"/></svg>
<div class="t" style="left:1061px;transform:translateX(-50%);top:101px;font-size:7.2px;color:#404040;font-weight:700;">Text</div>
<svg style="position:absolute;left:1123px;top:46px;" width="12" height="12" viewBox="0 0 12 12" fill="none"><path d="M1 1.5 H10 M3 1.5 V10 M8 1.5 V9 C8 10 9 10 10 10" stroke="#a0a0a0" stroke-width="1"/></svg>
<div class="t" style="left:1135px;top:53.5px;font-size:8.1px;color:#a8a8a8;font-weight:400;">Formel</div>
<svg style="position:absolute;left:1165px;top:51px;" width="6" height="4" viewBox="0 0 6 4" fill="none"><path d="M0.8 0.8 L3 3 L5.2 0.8" stroke="#a8a8a8" stroke-width="0.9"/></svg>
<svg style="position:absolute;left:1122px;top:62px;" width="12" height="12" viewBox="0 0 12 12" fill="none"><path d="M1 10.5 H4 V9 C1.5 8 1 6 1 5 C1 2.5 3 1 6 1 C9 1 11 2.5 11 5 C11 6 10.5 8 8 9 V10.5 H11" stroke="#a0a0a0" stroke-width="1"/></svg>
<div class="t" style="left:1135px;top:69.5px;font-size:8.1px;color:#a8a8a8;font-weight:400;">Symbol</div>
<div class="t" style="left:1147.5px;transform:translateX(-50%);top:101px;font-size:7.2px;color:#404040;font-weight:700;">Symbole</div>
<svg style="position:absolute;left:1194px;top:47px;" width="23" height="22" viewBox="0 0 23 22" fill="none"><rect x="1" y="1" width="13" height="13" fill="#d0d0d0"/><circle cx="13.5" cy="12.5" r="7.5" fill="#f4f4f4" stroke="#a8a8a8" stroke-width="1.2"/></svg>
<div class="t" style="left:1205.5px;transform:translateX(-50%);top:76.5px;font-size:8.1px;color:#a8a8a8;font-weight:400;">Formen</div>
<svg style="position:absolute;left:1202.5px;top:85px;" width="6" height="4" viewBox="0 0 6 4" fill="none"><path d="M0.8 0.8 L3 3 L5.2 0.8" stroke="#a8a8a8" stroke-width="0.9"/></svg>
<div class="t" style="left:1205.5px;transform:translateX(-50%);top:101px;font-size:7.2px;color:#404040;font-weight:700;">Neue Gruppe</div>
<svg style="position:absolute;left:1266px;top:99px;" width="10" height="7" viewBox="0 0 10 7" fill="none"><path d="M1.5 5 L5 1.5 L8.5 5" stroke="#333" stroke-width="1"/></svg>
<div style="position:absolute;left:0px;top:109px;width:1280px;height:29px;background:#fff;"></div>
<div style="position:absolute;left:3px;top:114px;width:69px;height:17px;border:1px solid #dadada;box-sizing:border-box;background:#fff;box-shadow:0 1px 0 #eee;"></div>
<div class="t" style="left:8px;top:122.5px;font-size:8.8px;color:#333;font-weight:400;">B2</div>
<svg style="position:absolute;left:61px;top:120px;" width="6" height="4" viewBox="0 0 6 4" fill="none"><path d="M0.5 0.5 H5.5 L3 3.5 Z" fill="#666"/></svg>
<div class="t" style="left:81px;transform:translateX(-50%);top:122px;font-size:9px;color:#777;font-weight:400;">⋮</div>
<div style="position:absolute;left:91px;top:114px;width:74px;height:17px;border:1px solid #dadada;box-sizing:border-box;background:#fff;"></div>
<svg style="position:absolute;left:99px;top:118px;" width="10" height="10" viewBox="0 0 10 10" fill="none"><path d="M1.5 1.5 L8.5 8.5 M8.5 1.5 L1.5 8.5" stroke="#c4c4c4" stroke-width="1"/></svg>
<svg style="position:absolute;left:123px;top:118px;" width="11" height="10" viewBox="0 0 11 10" fill="none"><path d="M1 5 L4 8.5 L10 1.5" stroke="#c4c4c4" stroke-width="1.1"/></svg>
<div class="t" style="left:147px;top:122.5px;font-size:10.5px;color:#444;font-weight:700;font-family:Liberation Serif;"><i>f</i><span style="font-size:7px;position:relative;top:1px"><i>x</i></span></div>
<div style="position:absolute;left:167px;top:114px;width:110px;height:17px;border:1px solid #dadada;border-right:none;box-sizing:border-box;background:#fff;"></div>
<div style="position:absolute;left:167px;top:114px;width:1110px;height:17px;border:1px solid #dadada;box-sizing:border-box;background:#fff;"></div>
<div class="t" style="left:175px;top:122.5px;font-size:8.8px;color:#222;font-weight:400;">="KW"&amp;B6</div>
<svg style="position:absolute;left:1265px;top:118px;" width="10" height="8" viewBox="0 0 10 8" fill="none"><path d="M2 2 L5 5 L8 2" stroke="#bbb" stroke-width="1"/></svg>
<div style="position:absolute;left:0px;top:131px;width:1280px;height:529px;background:#fff;"></div>
<div style="position:absolute;left:33px;top:138px;width:102px;height:24px;background:#fff;"></div>
<div style="position:absolute;left:134px;top:140px;width:1px;height:22px;background:#dcdcdc;"></div>
<div class="t" style="left:84.0px;transform:translateX(-50%);top:151px;font-size:16.8px;color:#3a3a3a;font-weight:400;">A</div>
<div style="position:absolute;left:135px;top:138px;width:101px;height:24px;background:#e0e0e0;"></div>
<div style="position:absolute;left:236px;top:138px;width:1px;height:24px;background:#c4c4c4;"></div>
<div class="t" style="left:185.5px;transform:translateX(-50%);top:151px;font-size:16.8px;color:#3b4a42;font-weight:400;">B</div>
<div style="position:absolute;left:236px;top:138px;width:137px;height:24px;background:#e0e0e0;"></div>
<div style="position:absolute;left:373px;top:138px;width:1px;height:24px;background:#c4c4c4;"></div>
<div class="t" style="left:304.5px;transform:translateX(-50%);top:151px;font-size:16.8px;color:#3b4a42;font-weight:400;">C</div>
<div style="position:absolute;left:373px;top:138px;width:162px;height:24px;background:#e0e0e0;"></div>
<div style="position:absolute;left:535px;top:138px;width:1px;height:24px;background:#c4c4c4;"></div>
<div class="t" style="left:454.0px;transform:translateX(-50%);top:151px;font-size:16.8px;color:#3b4a42;font-weight:400;">D</div>
<div style="position:absolute;left:535px;top:138px;width:142px;height:24px;background:#e0e0e0;"></div>
<div style="position:absolute;left:677px;top:138px;width:1px;height:24px;background:#c4c4c4;"></div>
<div class="t" style="left:606.0px;transform:translateX(-50%);top:151px;font-size:16.8px;color:#3b4a42;font-weight:400;">E</div>
<div style="position:absolute;left:677px;top:138px;width:101px;height:24px;background:#e0e0e0;"></div>
<div style="position:absolute;left:778px;top:138px;width:1px;height:24px;background:#c4c4c4;"></div>
<div class="t" style="left:727.5px;transform:translateX(-50%);top:151px;font-size:16.8px;color:#3b4a42;font-weight:400;">F</div>
<div style="position:absolute;left:778px;top:138px;width:102px;height:24px;background:#e0e0e0;"></div>
<div style="position:absolute;left:880px;top:138px;width:1px;height:24px;background:#c4c4c4;"></div>
<div class="t" style="left:829.0px;transform:translateX(-50%);top:151px;font-size:16.8px;color:#3b4a42;font-weight:400;">G</div>
<div style="position:absolute;left:880px;top:138px;width:121px;height:24px;background:#fff;"></div>
<div style="position:absolute;left:1000px;top:140px;width:1px;height:22px;background:#dcdcdc;"></div>
<div class="t" style="left:940.5px;transform:translateX(-50%);top:151px;font-size:16.8px;color:#3a3a3a;font-weight:400;">H</div>
<div style="position:absolute;left:1001px;top:138px;width:100px;height:24px;background:#fff;"></div>
<div style="position:absolute;left:1100px;top:140px;width:1px;height:22px;background:#dcdcdc;"></div>
<div class="t" style="left:1051.0px;transform:translateX(-50%);top:151px;font-size:16.8px;color:#3a3a3a;font-weight:400;">I</div>
<div style="position:absolute;left:1101px;top:138px;width:101px;height:24px;background:#fff;"></div>
<div style="position:absolute;left:1201px;top:140px;width:1px;height:22px;background:#dcdcdc;"></div>
<div class="t" style="left:1151.5px;transform:translateX(-50%);top:151px;font-size:16.8px;color:#3a3a3a;font-weight:400;">J</div>
<div style="position:absolute;left:1202px;top:138px;width:101px;height:24px;background:#fff;"></div>
<div style="position:absolute;left:1302px;top:140px;width:1px;height:22px;background:#dcdcdc;"></div>
<div class="t" style="left:1252.5px;transform:translateX(-50%);top:151px;font-size:16.8px;color:#3a3a3a;font-weight:400;">K</div>
<div style="position:absolute;left:33px;top:162px;width:1233px;height:1px;background:#a8a8a8;"></div>
<div style="position:absolute;left:135px;top:160px;width:745px;height:1.5px;background:#eef3ef;"></div>
<svg style="position:absolute;left:11px;top:140px;" width="22" height="22" viewBox="0 0 22 22" fill="none"><path d="M20 1 V20 H1 Z" fill="#dedede"/></svg>
<div style="position:absolute;left:32px;top:140px;width:1px;height:22px;background:#e6e6e6;"></div>
<div style="position:absolute;left:0px;top:162px;width:33px;height:498px;background:#e1e1e1;"></div>
<div class="t" style="left:16.5px;transform:translateX(-50%);top:213.5px;font-size:16.5px;color:#3d5f4c;font-weight:400;">2</div>
<div style="position:absolute;left:0px;top:226px;width:33px;height:1px;background:#c9c9c9;"></div>
<div class="t" style="left:16.5px;transform:translateX(-50%);top:239.0px;font-size:16.5px;color:#3d5f4c;font-weight:400;">3</div>
<div style="position:absolute;left:0px;top:251px;width:33px;height:1px;background:#c9c9c9;"></div>
<div class="t" style="left:16.5px;transform:translateX(-50%);top:264.0px;font-size:16.5px;color:#3d5f4c;font-weight:400;">4</div>
<div style="position:absolute;left:0px;top:276px;width:33px;height:1px;background:#c9c9c9;"></div>
<div class="t" style="left:16.5px;transform:translateX(-50%);top:289.5px;font-size:16.5px;color:#3d5f4c;font-weight:400;">5</div>
<div style="position:absolute;left:0px;top:302px;width:33px;height:1px;background:#c9c9c9;"></div>
<div class="t" style="left:16.5px;transform:translateX(-50%);top:315.0px;font-size:16.5px;color:#3d5f4c;font-weight:400;">6</div>
<div style="position:absolute;left:0px;top:327px;width:33px;height:1px;background:#c9c9c9;"></div>
<div class="t" style="left:16.5px;transform:translateX(-50%);top:340.0px;font-size:16.5px;color:#3d5f4c;font-weight:400;">7</div>
<div style="position:absolute;left:0px;top:352px;width:33px;height:1px;background:#c9c9c9;"></div>
<div class="t" style="left:16.5px;transform:translateX(-50%);top:365.5px;font-size:16.5px;color:#3d5f4c;font-weight:400;">8</div>
<div style="position:absolute;left:0px;top:378px;width:33px;height:1px;background:#c9c9c9;"></div>
<div class="t" style="left:16.5px;transform:translateX(-50%);top:391.0px;font-size:16.5px;color:#3d5f4c;font-weight:400;">9</div>
<div style="position:absolute;left:0px;top:403px;width:33px;height:1px;background:#c9c9c9;"></div>
<div class="t" style="left:16.5px;transform:translateX(-50%);top:416.0px;font-size:16.5px;color:#3d5f4c;font-weight:400;">10</div>
<div style="position:absolute;left:0px;top:428px;width:33px;height:1px;background:#c9c9c9;"></div>
<div class="t" style="left:16.5px;transform:translateX(-50%);top:441.5px;font-size:16.5px;color:#3d5f4c;font-weight:400;">11</div>
<div style="position:absolute;left:0px;top:454px;width:33px;height:1px;background:#c9c9c9;"></div>
<div class="t" style="left:16.5px;transform:translateX(-50%);top:467.0px;font-size:16.5px;color:#3d5f4c;font-weight:400;">12</div>
<div style="position:absolute;left:0px;top:479px;width:33px;height:1px;background:#c9c9c9;"></div>
<div class="t" style="left:16.5px;transform:translateX(-50%);top:492.0px;font-size:16.5px;color:#3d5f4c;font-weight:400;">13</div>
<div style="position:absolute;left:0px;top:504px;width:33px;height:1px;background:#c9c9c9;"></div>
<div class="t" style="left:16.5px;transform:translateX(-50%);top:517.5px;font-size:16.5px;color:#3d5f4c;font-weight:400;">14</div>
<div style="position:absolute;left:0px;top:530px;width:33px;height:1px;background:#c9c9c9;"></div>
<div class="t" style="left:16.5px;transform:translateX(-50%);top:543.0px;font-size:16.5px;color:#3d5f4c;font-weight:400;">15</div>
<div style="position:absolute;left:0px;top:555px;width:33px;height:1px;background:#c9c9c9;"></div>
<div class="t" style="left:16.5px;transform:translateX(-50%);top:568.0px;font-size:16.5px;color:#3d5f4c;font-weight:400;">16</div>
<div style="position:absolute;left:0px;top:580px;width:33px;height:1px;background:#c9c9c9;"></div>
<div class="t" style="left:16.5px;transform:translateX(-50%);top:593.5px;font-size:16.5px;color:#3d5f4c;font-weight:400;">17</div>
<div style="position:absolute;left:0px;top:606px;width:33px;height:1px;background:#c9c9c9;"></div>
<div class="t" style="left:16.5px;transform:translateX(-50%);top:619.0px;font-size:16.5px;color:#3d5f4c;font-weight:400;">18</div>
<div style="position:absolute;left:0px;top:631px;width:33px;height:1px;background:#c9c9c9;"></div>
<div class="t" style="left:16.5px;transform:translateX(-50%);top:644.5px;font-size:16.5px;color:#3d5f4c;font-weight:400;">19</div>
<div style="position:absolute;left:0px;top:657px;width:33px;height:1px;background:#c9c9c9;"></div>
<div style="position:absolute;left:33px;top:162px;width:1px;height:498px;background:#2e4a3a;"></div>
<div style="position:absolute;left:135px;top:162px;width:745px;height:64px;background:#048540;"></div>
<div class="t" style="left:185.5px;transform:translateX(-50%);top:194px;font-size:16.5px;color:#c6efce;font-weight:700;">Lfd. Nr.</div>
<div class="t" style="left:304.5px;transform:translateX(-50%);top:194px;font-size:16.5px;color:#c6efce;font-weight:700;">Kalenderwoche</div>
<div class="t" style="left:454.0px;transform:translateX(-50%);top:182px;font-size:16.5px;color:#c6efce;font-weight:700;">Umsatz pro Woche</div>
<div class="t" style="left:454.0px;transform:translateX(-50%);top:207px;font-size:16.5px;color:#c6efce;font-weight:700;">[EUR]</div>
<div class="t" style="left:606.0px;transform:translateX(-50%);top:194px;font-size:16.5px;color:#c6efce;font-weight:700;">Vertriebsteam</div>
<div class="t" style="left:727.5px;transform:translateX(-50%);top:182px;font-size:16.5px;color:#c6efce;font-weight:700;">Anzahl</div>
<div class="t" style="left:727.5px;transform:translateX(-50%);top:207px;font-size:16.5px;color:#c6efce;font-weight:700;">Mitarbeiter</div>
<div class="t" style="left:829.0px;transform:translateX(-50%);top:182px;font-size:16.5px;color:#c6efce;font-weight:700;">Anzahl</div>
<div class="t" style="left:829.0px;transform:translateX(-50%);top:207px;font-size:16.5px;color:#c6efce;font-weight:700;">Telefonate</div>
<div style="position:absolute;left:236px;top:162px;width:1px;height:64px;background:#0d3b1e;"></div>
<div style="position:absolute;left:372px;top:162px;width:1px;height:64px;background:#0d3b1e;"></div>
<div style="position:absolute;left:534px;top:162px;width:1px;height:64px;background:#0d3b1e;"></div>
<div style="position:absolute;left:676px;top:162px;width:1px;height:64px;background:#0d3b1e;"></div>
<div style="position:absolute;left:778px;top:162px;width:1px;height:64px;background:#0d3b1e;"></div>
<div style="position:absolute;left:135px;top:225px;width:745px;height:1px;background:#111;"></div>
<div style="position:absolute;left:135px;top:226px;width:745px;height:434px;background:#c6c6c8;"></div>
<div style="position:absolute;left:237px;top:302px;width:135px;height:25px;background:#fff;"></div>
<div class="t" style="right:1047px;top:240.0px;font-size:16.8px;color:#111;font-weight:400;">1</div>
<div class="t" style="left:304.5px;transform:translateX(-50%);top:240.0px;font-size:16.8px;color:#111;font-weight:400;">KW1</div>
<div class="t" style="right:755px;top:240.0px;font-size:16.8px;color:#111;font-weight:400;">26.620</div>
<div class="t" style="left:606px;transform:translateX(-50%);top:240.0px;font-size:16.5px;color:#111;font-weight:400;">B</div>
<div class="t" style="right:504px;top:240.0px;font-size:16.8px;color:#111;font-weight:400;">44</div>
<div class="t" style="right:403px;top:240.0px;font-size:16.8px;color:#111;font-weight:400;">4656</div>
<div class="t" style="right:1047px;top:265.0px;font-size:16.8px;color:#111;font-weight:400;">2</div>
<div class="t" style="left:304.5px;transform:translateX(-50%);top:265.0px;font-size:16.8px;color:#111;font-weight:400;">KW2</div>
<div class="t" style="right:755px;top:265.0px;font-size:16.8px;color:#111;font-weight:400;">31.547</div>
<div class="t" style="left:606px;transform:translateX(-50%);top:265.0px;font-size:16.5px;color:#111;font-weight:400;">A</div>
<div class="t" style="right:504px;top:265.0px;font-size:16.8px;color:#111;font-weight:400;">55</div>
<div class="t" style="right:403px;top:265.0px;font-size:16.8px;color:#111;font-weight:400;">4313</div>
<div class="t" style="right:1047px;top:290.5px;font-size:16.8px;color:#111;font-weight:400;">3</div>
<div class="t" style="left:304.5px;transform:translateX(-50%);top:290.5px;font-size:16.8px;color:#111;font-weight:400;">KW3</div>
<div class="t" style="right:755px;top:290.5px;font-size:16.8px;color:#111;font-weight:400;">45.112</div>
<div class="t" style="left:606px;transform:translateX(-50%);top:290.5px;font-size:16.5px;color:#111;font-weight:400;">C</div>
<div class="t" style="right:504px;top:290.5px;font-size:16.8px;color:#111;font-weight:400;">33</div>
<div class="t" style="right:403px;top:290.5px;font-size:16.8px;color:#111;font-weight:400;">5091</div>
<div class="t" style="right:1047px;top:316.0px;font-size:16.8px;color:#111;font-weight:400;">4</div>
<div class="t" style="left:304.5px;transform:translateX(-50%);top:316.0px;font-size:16.8px;color:#111;font-weight:400;">KW4</div>
<div class="t" style="right:755px;top:316.0px;font-size:16.8px;color:#111;font-weight:400;">23.876</div>
<div class="t" style="left:606px;transform:translateX(-50%);top:316.0px;font-size:16.5px;color:#111;font-weight:400;">B</div>
<div class="t" style="right:504px;top:316.0px;font-size:16.8px;color:#111;font-weight:400;">57</div>
<div class="t" style="right:403px;top:316.0px;font-size:16.8px;color:#111;font-weight:400;">5015</div>
<div class="t" style="right:1047px;top:341.0px;font-size:16.8px;color:#111;font-weight:400;">5</div>
<div class="t" style="left:304.5px;transform:translateX(-50%);top:341.0px;font-size:16.8px;color:#111;font-weight:400;">KW5</div>
<div class="t" style="right:755px;top:341.0px;font-size:16.8px;color:#111;font-weight:400;">38.904</div>
<div class="t" style="left:606px;transform:translateX(-50%);top:341.0px;font-size:16.5px;color:#111;font-weight:400;">A</div>
<div class="t" style="right:504px;top:341.0px;font-size:16.8px;color:#111;font-weight:400;">55</div>
<div class="t" style="right:403px;top:341.0px;font-size:16.8px;color:#111;font-weight:400;">5077</div>
<div class="t" style="right:1047px;top:366.5px;font-size:16.8px;color:#111;font-weight:400;">6</div>
<div class="t" style="left:304.5px;transform:translateX(-50%);top:366.5px;font-size:16.8px;color:#111;font-weight:400;">KW6</div>
<div class="t" style="right:755px;top:366.5px;font-size:16.8px;color:#111;font-weight:400;">49.215</div>
<div class="t" style="left:606px;transform:translateX(-50%);top:366.5px;font-size:16.5px;color:#111;font-weight:400;">C</div>
<div class="t" style="right:504px;top:366.5px;font-size:16.8px;color:#111;font-weight:400;">45</div>
<div class="t" style="right:403px;top:366.5px;font-size:16.8px;color:#111;font-weight:400;">4944</div>
<div class="t" style="right:1047px;top:392.0px;font-size:16.8px;color:#111;font-weight:400;">7</div>
<div class="t" style="left:304.5px;transform:translateX(-50%);top:392.0px;font-size:16.8px;color:#111;font-weight:400;">KW7</div>
<div class="t" style="right:755px;top:392.0px;font-size:16.8px;color:#111;font-weight:400;">25.480</div>
<div class="t" style="left:606px;transform:translateX(-50%);top:392.0px;font-size:16.5px;color:#111;font-weight:400;">B</div>
<div class="t" style="right:504px;top:392.0px;font-size:16.8px;color:#111;font-weight:400;">39</div>
<div class="t" style="right:403px;top:392.0px;font-size:16.8px;color:#111;font-weight:400;">4594</div>
<div class="t" style="right:1047px;top:417.0px;font-size:16.8px;color:#111;font-weight:400;">8</div>
<div class="t" style="left:304.5px;transform:translateX(-50%);top:417.0px;font-size:16.8px;color:#111;font-weight:400;">KW8</div>
<div class="t" style="right:755px;top:417.0px;font-size:16.8px;color:#111;font-weight:400;">45.763</div>
<div class="t" style="left:606px;transform:translateX(-50%);top:417.0px;font-size:16.5px;color:#111;font-weight:400;">A</div>
<div class="t" style="right:504px;top:417.0px;font-size:16.8px;color:#111;font-weight:400;">28</div>
<div class="t" style="right:403px;top:417.0px;font-size:16.8px;color:#111;font-weight:400;">5065</div>
<div class="t" style="right:1047px;top:442.5px;font-size:16.8px;color:#111;font-weight:400;">9</div>
<div class="t" style="left:304.5px;transform:translateX(-50%);top:442.5px;font-size:16.8px;color:#111;font-weight:400;">KW9</div>
<div class="t" style="right:755px;top:442.5px;font-size:16.8px;color:#111;font-weight:400;">53.208</div>
<div class="t" style="left:606px;transform:translateX(-50%);top:442.5px;font-size:16.5px;color:#111;font-weight:400;">C</div>
<div class="t" style="right:504px;top:442.5px;font-size:16.8px;color:#111;font-weight:400;">41</div>
<div class="t" style="right:403px;top:442.5px;font-size:16.8px;color:#111;font-weight:400;">5192</div>
<div class="t" style="right:1047px;top:468.0px;font-size:16.8px;color:#111;font-weight:400;">10</div>
<div class="t" style="left:304.5px;transform:translateX(-50%);top:468.0px;font-size:16.8px;color:#111;font-weight:400;">KW10</div>
<div class="t" style="right:755px;top:468.0px;font-size:16.8px;color:#111;font-weight:400;">26.371</div>
<div class="t" style="left:606px;transform:translateX(-50%);top:468.0px;font-size:16.5px;color:#111;font-weight:400;">B</div>
<div class="t" style="right:504px;top:468.0px;font-size:16.8px;color:#111;font-weight:400;">31</div>
<div class="t" style="right:403px;top:468.0px;font-size:16.8px;color:#111;font-weight:400;">5275</div>
<div class="t" style="right:1047px;top:493.0px;font-size:16.8px;color:#111;font-weight:400;">11</div>
<div class="t" style="left:304.5px;transform:translateX(-50%);top:493.0px;font-size:16.8px;color:#111;font-weight:400;">KW11</div>
<div class="t" style="right:755px;top:493.0px;font-size:16.8px;color:#111;font-weight:400;">41.567</div>
<div class="t" style="left:606px;transform:translateX(-50%);top:493.0px;font-size:16.5px;color:#111;font-weight:400;">C</div>
<div class="t" style="right:504px;top:493.0px;font-size:16.8px;color:#111;font-weight:400;">54</div>
<div class="t" style="right:403px;top:493.0px;font-size:16.8px;color:#111;font-weight:400;">5147</div>
<div class="t" style="right:1047px;top:518.5px;font-size:16.8px;color:#111;font-weight:400;">12</div>
<div class="t" style="left:304.5px;transform:translateX(-50%);top:518.5px;font-size:16.8px;color:#111;font-weight:400;">KW12</div>
<div class="t" style="right:755px;top:518.5px;font-size:16.8px;color:#111;font-weight:400;">53.949</div>
<div class="t" style="left:606px;transform:translateX(-50%);top:518.5px;font-size:16.5px;color:#111;font-weight:400;">A</div>
<div class="t" style="right:504px;top:518.5px;font-size:16.8px;color:#111;font-weight:400;">41</div>
<div class="t" style="right:403px;top:518.5px;font-size:16.8px;color:#111;font-weight:400;">5543</div>
<div class="t" style="right:1047px;top:544.0px;font-size:16.8px;color:#111;font-weight:400;">13</div>
<div class="t" style="left:304.5px;transform:translateX(-50%);top:544.0px;font-size:16.8px;color:#111;font-weight:400;">KW13</div>
<div class="t" style="right:755px;top:544.0px;font-size:16.8px;color:#111;font-weight:400;">27.656</div>
<div class="t" style="left:606px;transform:translateX(-50%);top:544.0px;font-size:16.5px;color:#111;font-weight:400;">B</div>
<div class="t" style="right:504px;top:544.0px;font-size:16.8px;color:#111;font-weight:400;">53</div>
<div class="t" style="right:403px;top:544.0px;font-size:16.8px;color:#111;font-weight:400;">4528</div>
<div class="t" style="right:1047px;top:569.0px;font-size:16.8px;color:#111;font-weight:400;">14</div>
<div class="t" style="left:304.5px;transform:translateX(-50%);top:569.0px;font-size:16.8px;color:#111;font-weight:400;">KW14</div>
<div class="t" style="right:755px;top:569.0px;font-size:16.8px;color:#111;font-weight:400;">42.756</div>
<div class="t" style="left:606px;transform:translateX(-50%);top:569.0px;font-size:16.5px;color:#111;font-weight:400;">C</div>
<div class="t" style="right:504px;top:569.0px;font-size:16.8px;color:#111;font-weight:400;">41</div>
<div class="t" style="right:403px;top:569.0px;font-size:16.8px;color:#111;font-weight:400;">4165</div>
<div class="t" style="right:1047px;top:594.5px;font-size:16.8px;color:#111;font-weight:400;">15</div>
<div class="t" style="left:304.5px;transform:translateX(-50%);top:594.5px;font-size:16.8px;color:#111;font-weight:400;">KW15</div>
<div class="t" style="right:755px;top:594.5px;font-size:16.8px;color:#111;font-weight:400;">51.533</div>
<div class="t" style="left:606px;transform:translateX(-50%);top:594.5px;font-size:16.5px;color:#111;font-weight:400;">A</div>
<div class="t" style="right:504px;top:594.5px;font-size:16.8px;color:#111;font-weight:400;">49</div>
<div class="t" style="right:403px;top:594.5px;font-size:16.8px;color:#111;font-weight:400;">4241</div>
<div class="t" style="right:1047px;top:620.0px;font-size:16.8px;color:#111;font-weight:400;">16</div>
<div class="t" style="left:304.5px;transform:translateX(-50%);top:620.0px;font-size:16.8px;color:#111;font-weight:400;">KW16</div>
<div class="t" style="right:755px;top:620.0px;font-size:16.8px;color:#111;font-weight:400;">36.157</div>
<div class="t" style="left:606px;transform:translateX(-50%);top:620.0px;font-size:16.5px;color:#111;font-weight:400;">B</div>
<div class="t" style="right:504px;top:620.0px;font-size:16.8px;color:#111;font-weight:400;">43</div>
<div class="t" style="right:403px;top:620.0px;font-size:16.8px;color:#111;font-weight:400;">5135</div>
<div class="t" style="right:1047px;top:645.5px;font-size:16.8px;color:#111;font-weight:400;">17</div>
<div class="t" style="left:304.5px;transform:translateX(-50%);top:645.5px;font-size:16.8px;color:#111;font-weight:400;">KW17</div>
<div class="t" style="right:755px;top:645.5px;font-size:16.8px;color:#111;font-weight:400;">40.970</div>
<div class="t" style="left:606px;transform:translateX(-50%);top:645.5px;font-size:16.5px;color:#111;font-weight:400;">C</div>
<div class="t" style="right:504px;top:645.5px;font-size:16.8px;color:#111;font-weight:400;">60</div>
<div class="t" style="right:403px;top:645.5px;font-size:16.8px;color:#111;font-weight:400;">4728</div>
<div style="position:absolute;left:135px;top:250px;width:745px;height:1px;background:#2a2a2a;"></div>
<div style="position:absolute;left:135px;top:275px;width:745px;height:1px;background:#2a2a2a;"></div>
<div style="position:absolute;left:135px;top:301px;width:745px;height:1px;background:#2a2a2a;"></div>
<div style="position:absolute;left:135px;top:326px;width:745px;height:1px;background:#2a2a2a;"></div>
<div style="position:absolute;left:135px;top:351px;width:745px;height:1px;background:#2a2a2a;"></div>
<div style="position:absolute;left:135px;top:377px;width:745px;height:1px;background:#2a2a2a;"></div>
<div style="position:absolute;left:135px;top:402px;width:745px;height:1px;background:#2a2a2a;"></div>
<div style="position:absolute;left:135px;top:427px;width:745px;height:1px;background:#2a2a2a;"></div>
<div style="position:absolute;left:135px;top:453px;width:745px;height:1px;background:#2a2a2a;"></div>
<div style="position:absolute;left:135px;top:478px;width:745px;height:1px;background:#2a2a2a;"></div>
<div style="position:absolute;left:135px;top:503px;width:745px;height:1px;background:#2a2a2a;"></div>
<div style="position:absolute;left:135px;top:529px;width:745px;height:1px;background:#2a2a2a;"></div>
<div style="position:absolute;left:135px;top:554px;width:745px;height:1px;background:#2a2a2a;"></div>
<div style="position:absolute;left:135px;top:579px;width:745px;height:1px;background:#2a2a2a;"></div>
<div style="position:absolute;left:135px;top:605px;width:745px;height:1px;background:#2a2a2a;"></div>
<div style="position:absolute;left:135px;top:630px;width:745px;height:1px;background:#2a2a2a;"></div>
<div style="position:absolute;left:135px;top:656px;width:745px;height:1px;background:#2a2a2a;"></div>
<div style="position:absolute;left:236px;top:226px;width:1px;height:434px;background:#111;"></div>
<div style="position:absolute;left:372px;top:226px;width:1.5px;height:434px;background:#666;"></div>
<div style="position:absolute;left:534px;top:226px;width:1.5px;height:434px;background:#666;"></div>
<div style="position:absolute;left:676px;top:226px;width:1.5px;height:434px;background:#666;"></div>
<div style="position:absolute;left:778px;top:226px;width:1px;height:434px;background:#111;"></div>
<div style="position:absolute;left:135px;top:162px;width:745px;height:1.5px;background:repeating-linear-gradient(90deg,#1d6a3d 0 4px,#5aa878 4px 6px);"></div>
<div style="position:absolute;left:134px;top:162px;width:1.5px;height:498px;background:repeating-linear-gradient(180deg,#1b6b3a 0 4px,#fff 4px 6px);"></div>
<div style="position:absolute;left:879px;top:162px;width:1.5px;height:498px;background:repeating-linear-gradient(180deg,#1b6b3a 0 4px,#fff 4px 6px);"></div>
<div style="position:absolute;left:1266px;top:131px;width:14px;height:529px;background:#fff;"></div>
<div style="position:absolute;left:1265px;top:162px;width:1px;height:498px;background:#cfcfcf;"></div>
<div style="position:absolute;left:1267px;top:150px;width:12px;height:498px;background:#f0f0f0;"></div>
<div style="position:absolute;left:1268px;top:140px;width:10px;height:9px;border:1px solid #c8c8c8;box-sizing:border-box;background:#fff;"></div>
<svg style="position:absolute;left:1269px;top:141px;" width="8" height="7" viewBox="0 0 8 7" fill="none"><path d="M1.5 5 L4 2 L6.5 5" stroke="#555" stroke-width="1"/></svg>
<div style="position:absolute;left:1268px;top:154px;width:10px;height:92px;border:1px solid #c8c8c8;box-sizing:border-box;background:#fff;"></div>
<div style="position:absolute;left:1268px;top:648px;width:10px;height:9px;border:1px solid #c8c8c8;box-sizing:border-box;background:#fff;"></div>
<svg style="position:absolute;left:1269px;top:649px;" width="8" height="7" viewBox="0 0 8 7" fill="none"><path d="M1.5 2 L4 5 L6.5 2" stroke="#555" stroke-width="1"/></svg>
<div style="position:absolute;left:0px;top:660px;width:1280px;height:19px;background:#f3f3f3;"></div>
<div style="position:absolute;left:0px;top:660px;width:1280px;height:1px;background:#d6d6d6;"></div>
<svg style="position:absolute;left:16px;top:665px;" width="8" height="9" viewBox="0 0 8 9" fill="none"><path d="M5.5 1.5 L2.5 4.5 L5.5 7.5" stroke="#c0c0c0" stroke-width="1"/></svg>
<svg style="position:absolute;left:34px;top:665px;" width="8" height="9" viewBox="0 0 8 9" fill="none"><path d="M2.5 1.5 L5.5 4.5 L2.5 7.5" stroke="#c0c0c0" stroke-width="1"/></svg>
<div style="position:absolute;left:66px;top:661px;width:1px;height:17px;background:#dcdcdc;"></div>
<div class="t" style="left:91.5px;transform:translateX(-50%);top:669.5px;font-size:8.8px;color:#444;font-weight:400;">Tabelle1</div>
<div style="position:absolute;left:117px;top:660px;width:56px;height:17px;background:#fff;box-shadow:0 1px 1px #bbb;"></div>
<div style="position:absolute;left:118px;top:675px;width:54px;height:1px;background:#5f8f72;"></div>
<div class="t" style="left:145px;transform:translateX(-50%);top:669px;font-size:8.3px;color:#1e6b41;font-weight:700;">Rohdaten</div>
<svg style="position:absolute;left:194px;top:663px;" width="12" height="12" viewBox="0 0 12 12" fill="none"><circle cx="6" cy="6" r="5" stroke="#666" stroke-width="1"/><path d="M6 3 V9 M3 6 H9" stroke="#666" stroke-width="1.1"/></svg>
<div class="t" style="left:769px;transform:translateX(-50%);top:669px;font-size:8px;color:#999;font-weight:400;">⋮</div>
<div style="position:absolute;left:780px;top:664px;width:486px;height:12px;background:#fff;border:1px solid #e0e0e0;box-sizing:border-box;"></div>
<div style="position:absolute;left:781px;top:665px;width:11px;height:10px;border:1px solid #c8c8c8;box-sizing:border-box;background:#fff;"></div>
<svg style="position:absolute;left:782px;top:666px;" width="9" height="8" viewBox="0 0 9 8" fill="none"><path d="M5.5 1 L2.5 4 L5.5 7 Z" fill="#555"/></svg>
<div style="position:absolute;left:795px;top:665px;width:414px;height:10px;background:#fff;border:1px solid #d8d8d8;box-sizing:border-box;"></div>
<div style="position:absolute;left:1209px;top:665px;width:45px;height:10px;background:#eaeaea;"></div>
<div style="position:absolute;left:1255px;top:665px;width:11px;height:10px;border:1px solid #c8c8c8;box-sizing:border-box;background:#fff;"></div>
<svg style="position:absolute;left:1256px;top:666px;" width="9" height="8" viewBox="0 0 9 8" fill="none"><path d="M3.5 1 L6.5 4 L3.5 7 Z" fill="#555"/></svg>
<div style="position:absolute;left:0px;top:679px;width:1280px;height:14px;background:#217346;"></div>
<div class="t" style="left:5px;top:686px;font-size:7.2px;color:#e6f2ea;font-weight:700;">Zeigen</div>
<svg style="position:absolute;left:40px;top:681px;" width="12" height="10" viewBox="0 0 12 10" fill="none"><rect x="0.5" y="0.5" width="10" height="8" stroke="#d8ecdf" stroke-width="1"/><circle cx="7" cy="5.5" r="2.5" stroke="#d8ecdf"/></svg>
<div class="t" style="left:861px;top:686.5px;font-size:7.4px;color:#fff;font-weight:400;-webkit-text-stroke:0.15px #fff;">Mittelwert: 12531,2031</div>
<div class="t" style="left:949px;top:686.5px;font-size:7.3px;color:#fff;font-weight:400;-webkit-text-stroke:0.15px #fff;">Anzahl: 606</div>
<div class="t" style="left:999px;top:686.5px;font-size:7.2px;color:#fff;font-weight:400;-webkit-text-stroke:0.15px #fff;">Summe: 5012481,24</div>
<svg style="position:absolute;left:1086px;top:680px;" width="12" height="12" viewBox="0 0 12 12" fill="none"><rect x="1" y="1" width="10" height="10" stroke="#4a8a64" stroke-width="0.8"/><path d="M1 4.5 H11 M1 8 H11 M4.5 1 V11 M8 1 V11" stroke="#4a8a64" stroke-width="0.8"/></svg>
<svg style="position:absolute;left:1112px;top:680px;" width="12" height="12" viewBox="0 0 12 12" fill="none"><rect x="1" y="1" width="10" height="10" stroke="#4a8a64" stroke-width="0.8"/><rect x="3.5" y="3.5" width="5" height="5" stroke="#4a8a64" stroke-width="0.8"/></svg>
<svg style="position:absolute;left:1139px;top:680px;" width="12" height="12" viewBox="0 0 12 12" fill="none"><path d="M1 1 V11 H11 V1 M1 6 H6 V1" stroke="#4a8a64" stroke-width="0.8"/></svg>
<div style="position:absolute;left:1162px;top:686px;width:5px;height:1px;background:#7fb596;"></div>
<div style="position:absolute;left:1171px;top:686px;width:66px;height:1px;background:#d0e8d9;"></div>
<div style="position:absolute;left:1203px;top:683px;width:1px;height:6px;background:#d0e8d9;"></div>
<div style="position:absolute;left:1241px;top:686px;width:5px;height:1px;background:#7fb596;"></div>
<div class="t" style="left:1253px;top:686px;font-size:7px;color:#4f9068;font-weight:400;">196 %</div>
<div style="position:absolute;left:0px;top:693px;width:1280px;height:27px;background:#050505;"></div>
<div style="position:absolute;left:491px;top:236px;width:268px;height:231px;background:rgba(0,0,0,0.28);filter:blur(1.2px);"></div>
<div style="position:absolute;left:490px;top:234px;width:267px;height:230px;background:#f0f0f0;border:1px solid #b8b8b8;box-sizing:border-box;"></div>
<div style="position:absolute;left:491px;top:235px;width:265px;height:19px;background:#fff;"></div>
<div class="t" style="left:497px;top:244.5px;font-size:7.7px;color:#000;font-weight:400;">PivotTable erstellen</div>
<div class="t" style="left:712px;transform:translateX(-50%);top:244px;font-size:9.5px;color:#333;font-weight:400;">?</div>
<svg style="position:absolute;left:737px;top:240px;" width="9" height="9" viewBox="0 0 9 9" fill="none"><path d="M1 1 L8 8 M8 1 L1 8" stroke="#333" stroke-width="0.9"/></svg>
<div class="t" style="left:495px;top:264.5px;font-size:7.7px;color:#000;font-weight:400;">Wählen Sie die zu analysierenden Daten aus.</div>
<div style="position:absolute;left:655px;top:264px;width:97px;height:1px;background:#dcdcdc;"></div>
<div style="position:absolute;left:501px;top:273px;width:9px;height:9px;border:1px solid #333;border-radius:50%;box-sizing:border-box;background:#fff;"></div>
<div style="position:absolute;left:503.5px;top:275.5px;width:4px;height:4px;background:#222;border-radius:50%;"></div>
<div class="t" style="left:512px;top:278.5px;font-size:7.7px;color:#000;font-weight:400;">Tabelle oder Bereich aus<u>w</u>ählen</div>
<div class="t" style="left:524px;top:292.5px;font-size:7.7px;color:#000;font-weight:400;"><u>T</u>abelle/Bereich:</div>
<div style="position:absolute;left:585px;top:285px;width:168px;height:14px;border:1px solid #bdbdbd;box-sizing:border-box;background:#fff;"></div>
<div style="position:absolute;left:588px;top:287px;width:80px;height:11px;background:#cfcfcf;"></div>
<div class="t" style="left:589px;top:292.5px;font-size:7.7px;color:#222;font-weight:400;">Rohdaten!$B$2:$G$102</div>
<div style="position:absolute;left:739px;top:285px;width:14px;height:14px;border:1px solid #bdbdbd;box-sizing:border-box;background:#f8f8f8;"></div>
<svg style="position:absolute;left:740px;top:286px;" width="12" height="12" viewBox="0 0 12 12" fill="none"><path d="M6 8.5 V3.5 M3.3 6 L6 3.3 L8.7 6" stroke="#111" stroke-width="1.4"/><path d="M4 10 H8" stroke="#bbb" stroke-width="1"/></svg>
<div style="position:absolute;left:501px;top:301px;width:9px;height:9px;border:1px solid #333;border-radius:50%;box-sizing:border-box;background:#fff;"></div>
<div class="t" style="left:512px;top:306.5px;font-size:7.7px;color:#000;font-weight:400;">E<u>x</u>terne Datenquelle verwenden</div>
<div style="position:absolute;left:525px;top:313px;width:98px;height:14px;border:1px solid #cdcdcd;box-sizing:border-box;background:#e3e3e3;"></div>
<div class="t" style="left:574px;transform:translateX(-50%);top:320.5px;font-size:7.7px;color:#a2a2a2;font-weight:400;">Verbindung auswählen...</div>
<div class="t" style="left:525px;top:335.5px;font-size:7.7px;color:#a2a2a2;font-weight:400;">Verbindungsname:</div>
<div style="position:absolute;left:501px;top:341px;width:9px;height:9px;border:1px solid #c4c4c4;border-radius:50%;box-sizing:border-box;background:#fff;"></div>
<div class="t" style="left:512px;top:346.5px;font-size:7.7px;color:#a2a2a2;font-weight:400;">Das Datenmodell dieser Arbeitsmappe verwenden</div>
<div class="t" style="left:495px;top:362.5px;font-size:7.7px;color:#000;font-weight:400;">Legen Sie fest, wo der PivotTable-Bericht platziert werden soll.</div>
<div style="position:absolute;left:712px;top:362px;width:40px;height:1px;background:#dcdcdc;"></div>
<div style="position:absolute;left:501px;top:370.5px;width:9px;height:9px;border:1px solid #333;border-radius:50%;box-sizing:border-box;background:#fff;"></div>
<div style="position:absolute;left:503.5px;top:373.0px;width:4px;height:4px;background:#222;border-radius:50%;"></div>
<div class="t" style="left:512px;top:376px;font-size:7.7px;color:#000;font-weight:400;"><u>N</u>eues Arbeitsblatt</div>
<div style="position:absolute;left:501px;top:383.5px;width:9px;height:9px;border:1px solid #333;border-radius:50%;box-sizing:border-box;background:#fff;"></div>
<div class="t" style="left:512px;top:389px;font-size:7.7px;color:#000;font-weight:400;">Vorhand<u>e</u>nes Arbeitsblatt</div>
<div class="t" style="left:525px;top:402.5px;font-size:7.7px;color:#000;font-weight:400;"><u>Z</u>iel:</div>
<div style="position:absolute;left:545px;top:396px;width:208px;height:14px;border:1px solid #d0d0d0;box-sizing:border-box;background:#f4f4f4;"></div>
<div style="position:absolute;left:739px;top:396px;width:14px;height:14px;border:1px solid #bdbdbd;box-sizing:border-box;background:#f8f8f8;"></div>
<svg style="position:absolute;left:740px;top:397px;" width="12" height="12" viewBox="0 0 12 12" fill="none"><path d="M6 8.5 V3.5 M3.3 6 L6 3.3 L8.7 6" stroke="#111" stroke-width="1.4"/><path d="M4 10 H8" stroke="#bbb" stroke-width="1"/></svg>
<div class="t" style="left:495px;top:419.5px;font-size:7.7px;color:#000;font-weight:400;">Wählen Sie, ob Sie mehrere Tabellen analysieren möchten.</div>
<div style="position:absolute;left:501px;top:428.5px;width:9px;height:9px;border:1px solid #333;box-sizing:border-box;background:#fff;"></div>
<div class="t" style="left:512px;top:433.5px;font-size:7.7px;color:#000;font-weight:400;">Dem Daten<u>m</u>odell diese Daten hinzufügen</div>
<div style="position:absolute;left:648px;top:444px;width:49px;height:15px;border:1.5px solid #3a6e9c;box-sizing:border-box;background:#e1e1e1;"></div>
<div class="t" style="left:672.5px;transform:translateX(-50%);top:451.5px;font-size:7.7px;color:#000;font-weight:400;">OK</div>
<div style="position:absolute;left:703px;top:444px;width:50px;height:15px;border:1px solid #b4b4b4;box-sizing:border-box;background:#e6e6e6;"></div>
<div class="t" style="left:727.5px;transform:translateX(-50%);top:451.5px;font-size:7.7px;color:#000;font-weight:400;">Abbrechen</div>
</body></html>
